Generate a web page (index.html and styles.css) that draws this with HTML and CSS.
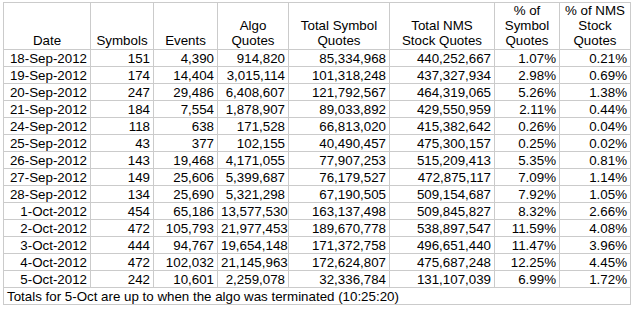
FILE: index.html
```html
<!DOCTYPE html>
<html lang="en">
<head>
  <meta charset="UTF-8">
  <title>Algo Quotes</title>
  <link rel="stylesheet" href="styles.css">
</head>
<body>
  <table class="quotes">
    <colgroup>
      <col class="c-date">
      <col class="c-sym">
      <col class="c-events">
      <col class="c-algo">
      <col class="c-total">
      <col class="c-nms">
      <col class="c-pct">
      <col class="c-pctnms">
    </colgroup>
    <thead>
      <tr>
        <th>Date</th>
        <th>Symbols</th>
        <th>Events</th>
        <th>Algo<br>Quotes</th>
        <th>Total Symbol<br>Quotes</th>
        <th>Total NMS<br>Stock Quotes</th>
        <th>% of<br>Symbol<br>Quotes</th>
        <th>% of NMS<br>Stock<br>Quotes</th>
      </tr>
    </thead>
    <tbody>
      <tr><td>18-Sep-2012</td><td>151</td><td>4,390</td><td>914,820</td><td>85,334,968</td><td>440,252,667</td><td>1.07%</td><td>0.21%</td></tr>
      <tr><td>19-Sep-2012</td><td>174</td><td>14,404</td><td>3,015,114</td><td>101,318,248</td><td>437,327,934</td><td>2.98%</td><td>0.69%</td></tr>
      <tr><td>20-Sep-2012</td><td>247</td><td>29,486</td><td>6,408,607</td><td>121,792,567</td><td>464,319,065</td><td>5.26%</td><td>1.38%</td></tr>
      <tr><td>21-Sep-2012</td><td>184</td><td>7,554</td><td>1,878,907</td><td>89,033,892</td><td>429,550,959</td><td>2.11%</td><td>0.44%</td></tr>
      <tr><td>24-Sep-2012</td><td>118</td><td>638</td><td>171,528</td><td>66,813,020</td><td>415,382,642</td><td>0.26%</td><td>0.04%</td></tr>
      <tr><td>25-Sep-2012</td><td>43</td><td>377</td><td>102,155</td><td>40,490,457</td><td>475,300,157</td><td>0.25%</td><td>0.02%</td></tr>
      <tr><td>26-Sep-2012</td><td>143</td><td>19,468</td><td>4,171,055</td><td>77,907,253</td><td>515,209,413</td><td>5.35%</td><td>0.81%</td></tr>
      <tr><td>27-Sep-2012</td><td>149</td><td>25,606</td><td>5,399,687</td><td>76,179,527</td><td>472,875,117</td><td>7.09%</td><td>1.14%</td></tr>
      <tr><td>28-Sep-2012</td><td>134</td><td>25,690</td><td>5,321,298</td><td>67,190,505</td><td>509,154,687</td><td>7.92%</td><td>1.05%</td></tr>
      <tr><td>1-Oct-2012</td><td>454</td><td>65,186</td><td>13,577,530</td><td>163,137,498</td><td>509,845,827</td><td>8.32%</td><td>2.66%</td></tr>
      <tr><td>2-Oct-2012</td><td>472</td><td>105,793</td><td>21,977,453</td><td>189,670,778</td><td>538,897,547</td><td>11.59%</td><td>4.08%</td></tr>
      <tr><td>3-Oct-2012</td><td>444</td><td>94,767</td><td>19,654,148</td><td>171,372,758</td><td>496,651,440</td><td>11.47%</td><td>3.96%</td></tr>
      <tr><td>4-Oct-2012</td><td>472</td><td>102,032</td><td>21,145,963</td><td>172,624,807</td><td>475,687,248</td><td>12.25%</td><td>4.45%</td></tr>
      <tr><td>5-Oct-2012</td><td>242</td><td>10,601</td><td>2,259,078</td><td>32,336,784</td><td>131,107,039</td><td>6.99%</td><td>1.72%</td></tr>
      <tr><td class="note" colspan="8">Totals for 5-Oct are up to when the algo was terminated (10:25:20)</td></tr>
    </tbody>
  </table>
</body>
</html>
```

FILE: styles.css
```css
* {
  box-sizing: border-box;
}

body {
  margin: 0;
  padding: 2px 0 0 3px;
  background: #fff;
  color: #000;
  font-family: "Liberation Sans", Arial, sans-serif;
  font-size: 13.33px;
}

.quotes {
  border-collapse: collapse;
  table-layout: fixed;
  width: 627px;
}

.c-date { width: 87px; }
.c-sym { width: 63px; }
.c-events { width: 64px; }
.c-algo { width: 71px; }
.c-total { width: 101px; }
.c-nms { width: 105px; }
.c-pct { width: 65px; }
.c-pctnms { width: 71px; }

.quotes th,
.quotes td {
  border: 1px solid #cbcbcb;
  padding: 0 3px;
  white-space: nowrap;
  overflow: hidden;
}

.quotes th {
  height: 46px;
  font-weight: normal;
  text-align: center;
  vertical-align: bottom;
  line-height: 15px;
  padding-bottom: 1px;
}

.quotes td {
  height: 17px;
  line-height: 15px;
  text-align: right;
}

.quotes td.note {
  text-align: left;
}
```
